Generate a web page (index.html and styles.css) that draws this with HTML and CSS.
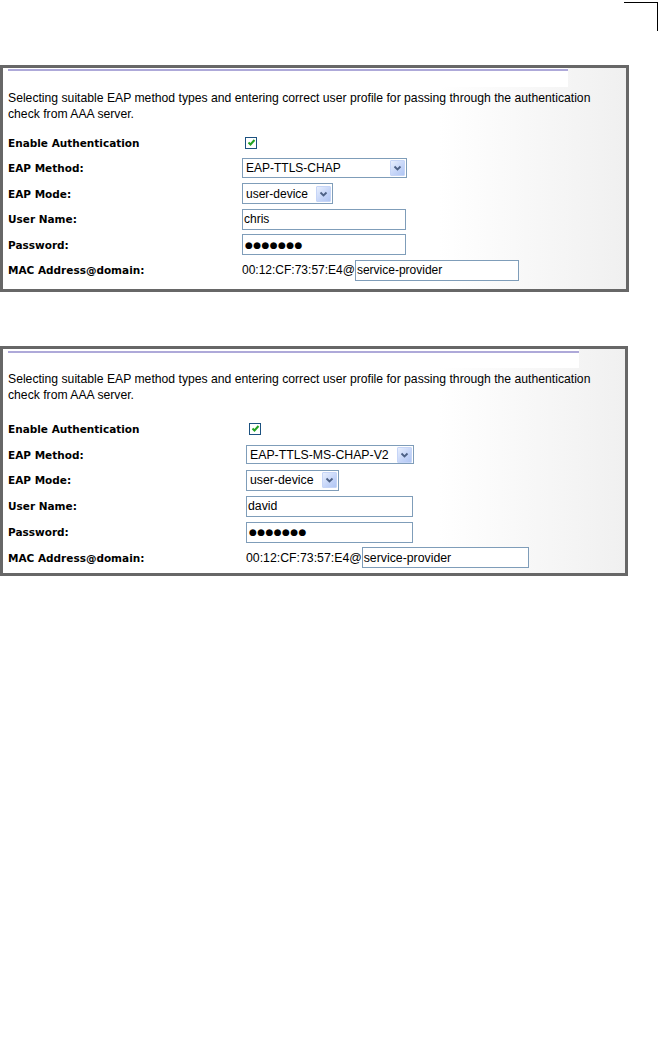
FILE: index.html
```html
<!DOCTYPE html>
<html lang="en">
<head>
    <meta charset="UTF-8">
    <meta name="viewport" content="width=device-width, initial-scale=1.0">
    <title>802.1X Authentication</title>
    <link rel="stylesheet" href="styles.css">
</head>
<body>
    <div class="sheet-top">
        <span class="crop-mark"></span>
    </div>

    <!-- Example 1: EAP-TTLS-CHAP -->
    <section class="panel panel-one">
        <div class="panel-head"><div class="rule"></div></div>
        <p class="intro">Selecting suitable EAP method types and entering correct user profile for passing through the authentication<br>check from AAA server.</p>
        <div class="form">
            <div class="row">
                <span class="label">Enable Authentication</span>
                <div class="value">
                    <span class="check"><svg width="9" height="9" viewBox="0 0 9 9"><path d="M1.5 4.5 L3.5 6.5 L7.5 2" fill="none" stroke="#22a322" stroke-width="2"/></svg></span>
                </div>
            </div>
            <div class="row">
                <span class="label">EAP Method:</span>
                <div class="value">
                    <div class="select select-wide">
                        <span class="select-text">EAP-TTLS-CHAP</span>
                        <span class="arrow"><svg width="9" height="6" viewBox="0 0 9 6"><path d="M1.5 1.5 L4.5 4.5 L7.5 1.5" fill="none" stroke="#4d6185" stroke-width="1.8"/></svg></span>
                    </div>
                </div>
            </div>
            <div class="row">
                <span class="label">EAP Mode:</span>
                <div class="value">
                    <div class="select select-short">
                        <span class="select-text">user-device</span>
                        <span class="arrow"><svg width="9" height="6" viewBox="0 0 9 6"><path d="M1.5 1.5 L4.5 4.5 L7.5 1.5" fill="none" stroke="#4d6185" stroke-width="1.8"/></svg></span>
                    </div>
                </div>
            </div>
            <div class="row">
                <span class="label">User Name:</span>
                <div class="value"><div class="field">chris</div></div>
            </div>
            <div class="row">
                <span class="label">Password:</span>
                <div class="value"><div class="field pass">●●●●●●●</div></div>
            </div>
            <div class="row">
                <span class="label">MAC Address@domain:</span>
                <div class="value">
                    <span class="mac">00:12:CF:73:57:E4@</span>
                    <div class="field">service-provider</div>
                </div>
            </div>
        </div>
    </section>

    <!-- Example 2: EAP-TTLS-MS-CHAP-V2 -->
    <section class="panel panel-two">
        <div class="panel-head"><div class="rule"></div></div>
        <p class="intro">Selecting suitable EAP method types and entering correct user profile for passing through the authentication<br>check from AAA server.</p>
        <div class="form">
            <div class="row">
                <span class="label">Enable Authentication</span>
                <div class="value">
                    <span class="check"><svg width="9" height="9" viewBox="0 0 9 9"><path d="M1.5 4.5 L3.5 6.5 L7.5 2" fill="none" stroke="#22a322" stroke-width="2"/></svg></span>
                </div>
            </div>
            <div class="row">
                <span class="label">EAP Method:</span>
                <div class="value">
                    <div class="select select-wide">
                        <span class="select-text">EAP-TTLS-MS-CHAP-V2</span>
                        <span class="arrow"><svg width="9" height="6" viewBox="0 0 9 6"><path d="M1.5 1.5 L4.5 4.5 L7.5 1.5" fill="none" stroke="#4d6185" stroke-width="1.8"/></svg></span>
                    </div>
                </div>
            </div>
            <div class="row">
                <span class="label">EAP Mode:</span>
                <div class="value">
                    <div class="select select-short">
                        <span class="select-text">user-device</span>
                        <span class="arrow"><svg width="9" height="6" viewBox="0 0 9 6"><path d="M1.5 1.5 L4.5 4.5 L7.5 1.5" fill="none" stroke="#4d6185" stroke-width="1.8"/></svg></span>
                    </div>
                </div>
            </div>
            <div class="row">
                <span class="label">User Name:</span>
                <div class="value"><div class="field">david</div></div>
            </div>
            <div class="row">
                <span class="label">Password:</span>
                <div class="value"><div class="field pass">●●●●●●●</div></div>
            </div>
            <div class="row">
                <span class="label">MAC Address@domain:</span>
                <div class="value">
                    <span class="mac">00:12:CF:73:57:E4@</span>
                    <div class="field">service-provider</div>
                </div>
            </div>
        </div>
    </section>
</body>
</html>
```

FILE: styles.css
```css
/* General */
body {
    margin: 0;
    background-color: #fff;
    color: #000;
    font-family: "Liberation Sans", Arial, sans-serif;
}

/* Page crop mark */
.sheet-top {
    height: 65px;
    display: flex;
    justify-content: flex-end;
    align-items: flex-start;
}

.crop-mark {
    width: 33px;
    height: 28px;
    margin-top: 2px;
    margin-right: 1px;
    border-top: 1px solid #000;
    border-right: 1px solid #000;
}

/* Panel */
.panel {
    box-sizing: border-box;
    width: 629px;
    border: 3px solid #676767;
    background: linear-gradient(to right, #fff 70%, #f0f0f0 100%);
}

.panel-head {
    width: 565px;
    height: 19px;
    padding-top: 1px;
    box-sizing: border-box;
    background-color: #fff;
}

.rule {
    height: 2px;
    width: 560px;
    margin-left: 5px;
    background-color: #aea9d9;
}

.intro {
    margin: 3px 0 0;
    padding-left: 5px;
    font-size: 12.2px;
    line-height: 16px;
}

.form {
    margin-top: 8px;
    padding-bottom: 6px;
}

.row {
    display: flex;
    align-items: center;
    height: 25.5px;
}

.label {
    box-sizing: border-box;
    width: 239px;
    padding-left: 5px;
    flex-shrink: 0;
    font-family: "DejaVu Sans", Verdana, sans-serif;
    font-size: 10.5px;
    font-weight: bold;
}

.value {
    display: flex;
    align-items: center;
    font-size: 12px;
}

/* Controls */
.check {
    box-sizing: border-box;
    width: 12px;
    height: 12px;
    margin-left: 3px;
    border: 1px solid #1c5180;
    background-color: #fff;
    display: flex;
    align-items: center;
    justify-content: center;
}

.select {
    box-sizing: border-box;
    height: 20px;
    border: 1px solid #7f9db9;
    background-color: #fff;
    display: flex;
    align-items: center;
    justify-content: space-between;
    padding-right: 1px;
}

.select-wide {
    width: 165px;
}

.select-short {
    width: 91px;
    height: 21px;
}

.select-text {
    padding-left: 3px;
    white-space: nowrap;
    overflow: hidden;
}

.arrow {
    box-sizing: border-box;
    width: 15px;
    height: 16px;
    flex-shrink: 0;
    margin-left: 2px;
    border: 1px solid #c6d5f7;
    border-radius: 1px;
    background: linear-gradient(135deg, #e8effd 0%, #c4d4f8 60%, #b1c6f3 100%);
    display: flex;
    align-items: center;
    justify-content: center;
}

.field {
    box-sizing: border-box;
    width: 164px;
    height: 21px;
    padding-left: 1px;
    border: 1px solid #7f9db9;
    background-color: #fff;
    display: flex;
    align-items: center;
}

.pass {
    font-family: "DejaVu Sans", sans-serif;
    font-size: 9px;
    letter-spacing: 0.4px;
    padding-left: 2px;
}

.mac {
    white-space: nowrap;
}

/* Second example is a slightly larger capture */
.panel-two {
    width: 628px;
    margin-top: 54px;
}

.panel-two .panel-head {
    width: 576px;
    padding-top: 2px;
}

.panel-two .rule {
    width: 571px;
}

.panel-two .form {
    margin-top: 13px;
    padding-bottom: 2px;
}

.panel-two .row {
    height: 25.8px;
}

.panel-two .label {
    width: 243px;
}

.panel-two .select-wide {
    width: 168px;
    height: 19px;
}

.panel-two .select-short {
    width: 93px;
}

.panel-two .field {
    width: 167px;
}

.panel-two .value {
    font-size: 12.3px;
}
```
